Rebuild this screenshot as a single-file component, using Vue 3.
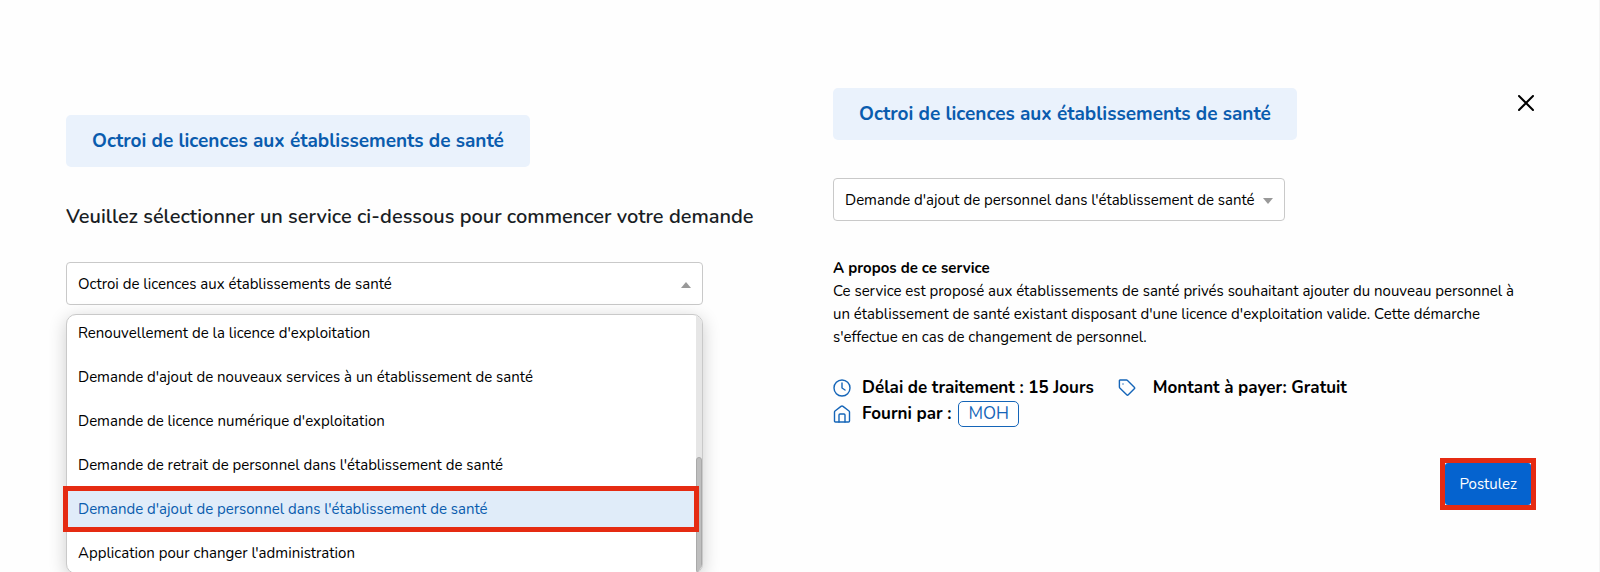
<script setup>
import { ref } from 'vue'

const category = 'Octroi de licences aux établissements de santé'
const services = [
  "Renouvellement de la licence d'exploitation",
  "Demande d'ajout de nouveaux services à un établissement de santé",
  "Demande de licence numérique d'exploitation",
  "Demande de retrait de personnel dans l'établissement de santé",
  "Demande d'ajout de personnel dans l'établissement de santé",
  "Application pour changer l'administration",
]
const selected = ref(services[4])
</script>

<template>
  <main class="page">
    <section class="panel picker">
      <h2 class="chip">{{ category }}</h2>
      <h1 class="prompt">
        <label for="category">Veuillez sélectionner un service ci-dessous pour commencer votre demande</label>
      </h1>
      <div class="combo">
        <select id="category" class="field">
          <option>{{ category }}</option>
        </select>
        <svg class="caret" viewBox="0 0 10 6" aria-hidden="true"><path d="M0 6 5 0l5 6z" /></svg>
        <div class="menu">
          <div class="track"><div class="thumb"></div></div>
          <ul class="options" role="listbox" aria-label="Services">
            <li
              v-for="service in services"
              :key="service"
              class="option"
              :class="{ active: service === selected }"
              role="option"
              :aria-selected="service === selected"
              @click="selected = service"
            >{{ service }}</li>
          </ul>
        </div>
      </div>
    </section>

    <section class="panel details">
      <header class="head">
        <h2 class="chip">{{ category }}</h2>
        <button class="close" type="button" aria-label="Fermer">
          <svg viewBox="0 0 16 16" aria-hidden="true"><path d="M1 1l14 14M15 1 1 15" /></svg>
        </button>
      </header>
      <div class="combo compact">
        <select v-model="selected" class="field" aria-label="Service">
          <option v-for="service in services" :key="service">{{ service }}</option>
        </select>
        <svg class="caret" viewBox="0 0 10 6" aria-hidden="true"><path d="M0 0h10L5 6z" /></svg>
      </div>

      <div class="about">
        <h3>A propos de ce service</h3>
        <p>
          Ce service est proposé aux établissements de santé privés souhaitant ajouter du nouveau personnel à
          un établissement de santé existant disposant d'une licence d'exploitation valide. Cette démarche
          s'effectue en cas de changement de personnel.
        </p>
      </div>

      <div class="facts">
        <div class="fact">
          <svg class="icon" viewBox="0 0 18 18" aria-hidden="true">
            <circle cx="9" cy="9" r="8" /><path d="M9 4v5l3 2" />
          </svg>
          <span>Délai de traitement : 15 Jours</span>
        </div>
        <div class="fact cost">
          <svg class="icon" viewBox="0 0 18 18" aria-hidden="true">
            <path d="M2 1h6.500q.6 0 1 .4l6.800 6.800q.8.800 0 1.600l-6 6q-.8.800-1.600 0L1.800 9Q1.400 8.600 1.400 8V1.700Q1.400 1 2 1z" />
            <path d="M5 5v.1" />
          </svg>
          <span>Montant à payer: Gratuit</span>
        </div>
        <div class="fact provider">
          <svg class="icon" viewBox="0 0 18 18" aria-hidden="true">
            <path d="M1.500 7q0-.6.5-1l6-4.600q1-.7 2 0L16 6q.5.400.5 1v9q0 1-1 1h-13q-1 0-1-1z" />
            <path d="M6 17v-7q0-1 1-1h4q1 0 1 1v7" />
          </svg>
          <span>Fourni par :</span>
          <button class="tag" type="button">MOH</button>
        </div>
      </div>

      <div class="actions">
        <div class="frame">
          <button class="apply" type="button">Postulez</button>
        </div>
      </div>
    </section>
  </main>
</template>

<style>
body {
  margin: 0;
  background: #fefefe;
}
</style>

<style scoped>
.page {
  box-sizing: border-box;
  position: relative;
  display: grid;
  grid-template-columns: 767fr 703fr;
  min-height: 100vh;
  padding: 0 63px 0 66px;
  overflow: hidden;
  border-right: 1px solid #f4f4f4;
  color: #000;
  font-family: "Nunito", "Open Sans", sans-serif;
  font-size: 15px;
}
h1, h2, h3, p, ul {
  margin: 0;
  padding: 0;
}
button, select {
  margin: 0;
  font: inherit;
}
.picker {
  padding-top: 115px;
}
.details {
  padding-top: 88px;
}
.chip {
  box-sizing: border-box;
  width: 464px;
  padding: 13px 0 12px;
  border-radius: 5px;
  background: #eaf2fc;
  color: #0a5cae;
  font-size: 19px;
  font-weight: 700;
  line-height: 27px;
  text-align: center;
  white-space: nowrap;
}
.prompt {
  margin-top: 36px;
  color: #191d24;
  font-size: 20px;
  font-weight: 600;
  line-height: 27px;
  white-space: nowrap;
}
.combo {
  position: relative;
  width: 83%;
  margin-top: 32px;
}
.field {
  display: block;
  box-sizing: border-box;
  width: 100%;
  height: 43px;
  padding: 0 11px;
  appearance: none;
  border: 1px solid #c9c9c9;
  border-radius: 4px;
  background: #fff;
  color: #000;
}
.caret {
  position: absolute;
  top: 20px;
  right: 12px;
  width: 10px;
  height: 6px;
  fill: #999;
}
.compact {
  width: 452px;
  margin-top: 38px;
}
.menu {
  position: absolute;
  top: 52px;
  left: 0;
  right: 0;
  box-sizing: border-box;
  height: 260px;
  border: 1px solid #c9c9c9;
  border-radius: 10px;
  background: #fff;
  box-shadow: 0 4px 18px rgba(0, 0, 0, 0.2);
}
.track {
  position: absolute;
  inset: 0;
  overflow: hidden;
  border-radius: 9px;
  background: linear-gradient(#e6e6e6, #e6e6e6) right / 6px 100% no-repeat;
}
.thumb {
  position: absolute;
  right: 0;
  bottom: 0;
  box-sizing: border-box;
  width: 6px;
  height: 45%;
  border: 1px solid #a9a9a9;
  border-radius: 4px;
  background: #bebebe;
}
.options {
  position: relative;
  margin: -4px 7px 0 0;
  list-style: none;
}
.option {
  position: relative;
  padding: 10px 11px;
  line-height: 24px;
  white-space: nowrap;
}
.active {
  background: #e0ecf9;
  color: #0a5cae;
}
.active::after {
  content: "";
  position: absolute;
  inset: -1px -4px -1px -4px;
  border: 5px solid #e52b12;
}
.head {
  display: flex;
  justify-content: space-between;
}
.close {
  width: 16px;
  height: 16px;
  margin: 7px 2px 0 0;
  padding: 0;
  border: 0;
  background: none;
}
.close svg {
  display: block;
  fill: none;
  stroke: #000;
  stroke-width: 2;
  stroke-linecap: round;
}
.about {
  margin: 36px 8px 0 0;
  line-height: 23px;
}
.about h3 {
  font-size: 15px;
  font-weight: 700;
}
.facts {
  display: flex;
  flex-wrap: wrap;
  margin-top: 26px;
  font-size: 17px;
  font-weight: 700;
  line-height: 26px;
}
.fact {
  display: flex;
  align-items: center;
}
.fact span {
  margin-left: 11px;
}
.cost {
  margin-left: 24px;
}
.cost span {
  margin-left: 17px;
}
.provider {
  width: 100%;
}
.icon {
  width: 18px;
  height: 18px;
  fill: none;
  stroke: #1565b8;
  stroke-width: 1.4;
  stroke-linecap: round;
  stroke-linejoin: round;
}
.tag {
  margin-left: 7px;
  padding: 0 9px;
  border: 1px solid #1565b8;
  border-radius: 5px;
  background: #fff;
  color: #1565b8;
  font-weight: 400;
  line-height: 24px;
}
.actions {
  display: flex;
  justify-content: flex-end;
  margin-top: 31px;
}
.frame {
  border: 5px solid #e52b12;
}
.apply {
  display: block;
  padding: 9px 14px;
  border: 0;
  border-radius: 3px;
  background: #0563cf;
  color: #fff;
  line-height: 24px;
}
</style>
